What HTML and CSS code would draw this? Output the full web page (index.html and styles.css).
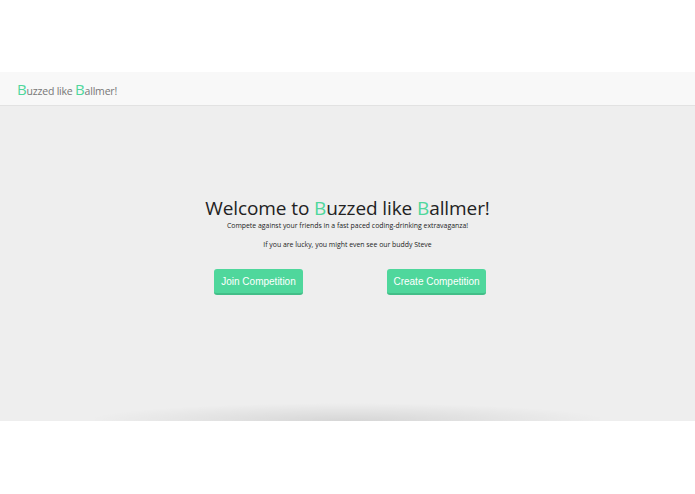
FILE: index.html
```html
<!DOCTYPE html>
<html>
<head>
<meta charset="utf-8">
<link rel="stylesheet" href="styles.css">
</head>
<body>
<div class="top-space"></div>
<nav class="navbar">
  <a class="brand"><span class="b">B</span>uzzed like <span class="b">B</span>allmer!</a>
</nav>
<section class="hero">
  <div class="content">
    <h1 class="title">Welcome to <span class="g">B</span>uzzed like <span class="g">B</span>allmer!</h1>
    <p class="sub">Compete against your friends in a fast paced coding-drinking extravaganza!</p>
    <p class="sub second">If you are lucky, you might even see our buddy Steve</p>
    <div class="buttons">
      <button class="btn join">Join Competition</button>
      <button class="btn create">Create Competition</button>
    </div>
  </div>
  <div class="shade"></div>
</section>
<div class="bottom"></div>
</body>
</html>
```
FILE: styles.css
```css
html, body { margin: 0; padding: 0; background: #fff; }
body { font-family: "Open Sans", "DejaVu Sans", sans-serif; }
.top-space { height: 72px; }
.navbar {
  height: 33px;
  background: #f8f8f8;
  border-bottom: 1px solid #e2e2e2;
  display: flex;
  align-items: center;
  padding-left: 17px;
}
.brand { font-size: 10.5px; color: #777; letter-spacing: -0.2px; margin-top: 1px; }
.brand .b { color: #4fd79c; font-size: 15px; }
.hero {
  height: 315px;
  background: #eeeeee;
  display: flex;
  flex-direction: column;
  overflow: hidden;
}
.content {
  padding-top: 89px;
  display: flex;
  flex-direction: column;
  align-items: center;
}
.title {
  margin: 0;
  font-weight: 400;
  font-size: 19px;
  color: #222;
  line-height: 26px;
  letter-spacing: -0.1px;
}
.title .g { color: #4fd79c; }
.sub { margin: 0; font-size: 6.9px; color: #222; line-height: 10px; }
.second { margin-top: 9px; }
.buttons {
  display: flex;
  gap: 84px;
  margin-top: 19px;
  margin-left: 5px;
}
.btn {
  font-family: "Liberation Sans", Arial, sans-serif;
  font-size: 10px;
  color: #fff;
  background: #4fd79c;
  border: none;
  border-bottom: 2px solid #43be88;
  border-radius: 3px;
  height: 26px;
  padding: 0;
  white-space: nowrap;
  cursor: pointer;
}
.join { width: 89px; }
.create { width: 99px; }
.shade {
  margin-top: auto;
  height: 18px;
  margin-left: 95px;
  margin-right: 95px;
  background: radial-gradient(ellipse 52% 100% at 50% 100%, rgba(0,0,0,0.1), rgba(0,0,0,0) 100%);
}
.bottom { height: 73px; }
```
